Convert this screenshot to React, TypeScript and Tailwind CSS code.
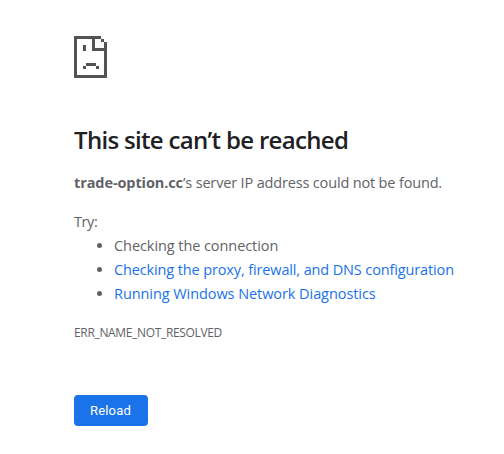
const link = "text-[#1a73e8]";

function SadPage() {
  return (
    <svg width="33" height="42" viewBox="0 0 33 42" shapeRendering="crispEdges" fill="#535353" className="block">
      <path d="M0 0H27V3H30V6H33V42H0ZM3 3V39H30V15H18V3ZM21 3V12H30V6H27V3Z" fillRule="evenodd" />
      <path d="M9 9H12V15H9ZM12 27H22V30H12ZM9 30H12V33H9ZM22 30H25V33H22Z" />
    </svg>
  );
}

export default function App() {
  return (
    <main className="h-[454px] w-[504px] overflow-hidden bg-white pt-9 pl-[74px] font-['Open_Sans','Noto_Sans',sans-serif] text-[14.5px] leading-6 font-normal whitespace-nowrap text-[#5f6368]">
      <SadPage />
      <h1 className="mt-[47px] text-[24px] leading-[30px] font-[550] tracking-[-0.68px] text-[#202124]">
        <span>This site can’t be reached</span>
      </h1>
      <p className="mt-4">
        <strong className="font-bold tracking-[-0.1px]">trade-option.cc</strong>
        <span className="tracking-[-0.16px]">’s server IP address could not be found.</span>
      </p>
      <p className="mt-[15px]">
        <span className="tracking-[-0.4px]">Try:</span>
      </p>
      <ul className="list-disc pl-10">
        <li><span className="tracking-[-0.07px]">Checking the connection</span></li>
        <li><a className={`${link} tracking-[-0.13px]`}>Checking the proxy, firewall, and DNS configuration</a></li>
        <li><a className={`${link} tracking-[-0.07px]`}>Running Windows Network Diagnostics</a></li>
      </ul>
      <p className="mt-[15px] text-[12px] tracking-[-0.34px]">ERR_NAME_NOT_RESOLVED</p>
      <button className="mt-[50px] block h-[31px] w-[74px] rounded-[4px] bg-[#1a73e8] font-['Roboto',sans-serif] text-[13px] leading-[31px] text-white font-normal"><span className="mr-px tracking-[0.15px]">Reload</span></button>
    </main>
  );
}
